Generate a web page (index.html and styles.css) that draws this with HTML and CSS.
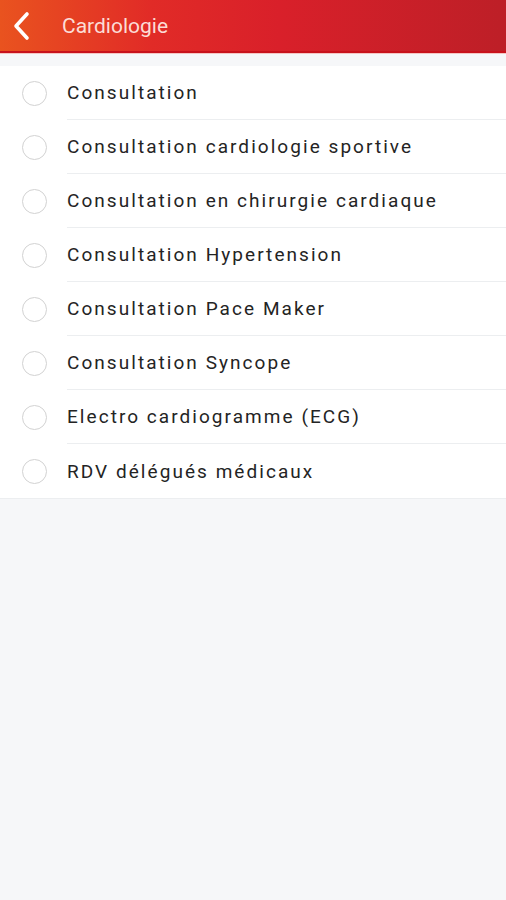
FILE: index.html
```html
<!DOCTYPE html>
<html lang="fr">

<head>
    <meta charset="UTF-8">
    <meta name="viewport" content="width=device-width, initial-scale=1.0">
    <title>Cardiologie</title>
    <link rel="stylesheet" href="styles.css">
</head>

<body>
    <header class="barre">
        <button class="retour" aria-label="Retour">
            <svg viewBox="0 0 20 30" width="20" height="30">
                <path d="M16 3 L5 15 L16 27" />
            </svg>
        </button>
        <h1>Cardiologie</h1>
    </header>

    <ul class="liste">
        <li><span class="radio"></span><span class="libelle">Consultation</span></li>
        <li><span class="radio"></span><span class="libelle">Consultation cardiologie sportive</span></li>
        <li><span class="radio"></span><span class="libelle">Consultation en chirurgie cardiaque</span></li>
        <li><span class="radio"></span><span class="libelle">Consultation Hypertension</span></li>
        <li><span class="radio"></span><span class="libelle">Consultation Pace Maker</span></li>
        <li><span class="radio"></span><span class="libelle">Consultation Syncope</span></li>
        <li><span class="radio"></span><span class="libelle">Electro cardiogramme (ECG)</span></li>
        <li><span class="radio"></span><span class="libelle">RDV délégués médicaux</span></li>
    </ul>
</body>

</html>
```

FILE: styles.css
```css
body {
    font-family: Roboto, 'Liberation Sans', sans-serif;
    background: #f6f7f9;
    margin: 0;
    min-height: 900px;
    color: #242424;
}

.barre {
    display: flex;
    align-items: center;
    height: 51px;
    background: linear-gradient(to right, #e9531f 0%, #e12b27 30%, #d9202a 55%, #bd1f27 100%);
    border-bottom: 2px solid #c8121c;
    box-shadow: 0 1px 0 #f4c6c4;
}

.retour {
    background: none;
    border: none;
    padding: 0;
    margin: 0 0 0 11px;
    width: 24px;
    height: 30px;
    display: flex;
    align-items: center;
    cursor: pointer;
}

.retour svg path {
    fill: none;
    stroke: #fff;
    stroke-width: 3.6;
    stroke-linecap: round;
    stroke-linejoin: round;
}

.barre h1 {
    margin: 0 0 0 27px;
    font-size: 21px;
    font-weight: 400;
    color: #fcdcd6;
}

.liste {
    list-style: none;
    margin: 13px 0 0;
    padding: 0;
    background: #fff;
    border-bottom: 1px solid #eceef0;
}

.liste li {
    display: flex;
    align-items: center;
    height: 54px;
    padding-left: 22px;
}

.radio {
    width: 23px;
    height: 23px;
    border: 1.5px solid #d2d2d2;
    border-radius: 50%;
    flex-shrink: 0;
}

.libelle {
    flex: 1;
    height: 53px;
    display: flex;
    align-items: center;
    margin-left: 20px;
    font-size: 19px;
    letter-spacing: 2.05px;
    border-bottom: 1px solid #eceef0;
}

.liste li:last-child .libelle {
    border-bottom: none;
}
```
